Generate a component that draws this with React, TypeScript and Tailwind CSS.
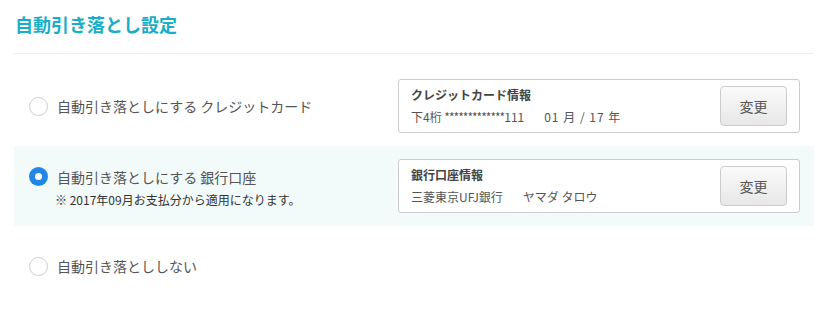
const font = { fontFamily: '"Noto Sans CJK JP", "Noto Sans", sans-serif' }

const Radio = ({ checked }: { checked?: boolean }) =>
  checked ? (
    <span className="flex h-[19px] w-[19px] shrink-0 items-center justify-center rounded-full bg-[#2186e6]">
      <span className="h-[7px] w-[7px] rounded-full bg-white" />
    </span>
  ) : (
    <span className="h-[19px] w-[19px] shrink-0 rounded-full border border-[#cfcfcf] bg-white" />
  )

const InfoCard = ({ title, children }: { title: string; children: React.ReactNode }) => (
  <div className="flex h-[54px] w-[402px] items-center justify-between rounded-[3px] border border-[#cccccc] bg-white pl-[12px] pr-[12px]">
    <div className="flex flex-col">
      <span className="text-[12px] font-bold leading-[18px] text-[#444]">{title}</span>
      <span className="mt-[4px] text-[12px] leading-[18px] text-[#555]">{children}</span>
    </div>
    <button className="h-[40px] w-[67px] rounded-[4px] border border-[#cccccc] bg-linear-to-b from-[#fafafa] to-[#e7e7e7] text-[14px] text-[#555]">
      変更
    </button>
  </div>
)

const App = () => {
  return (
    <div className="w-[832px] bg-white pl-[14px]" style={font}>
      <div className="w-[800px]">
        <div className="h-[54px] border-b border-[#efefef] pl-[1px] pt-[11px]">
          <h1 className="text-[18px] font-bold leading-[26px] text-[#19aec6]">自動引き落とし設定</h1>
        </div>

        <div className="mt-[12px]">
          <div className="flex h-[80px] items-center pl-[15px] pr-[14px]">
            <label className="flex w-[369px] items-center gap-[9px]">
              <Radio />
              <span className="text-[14px] text-[#555]">自動引き落としにする クレジットカード</span>
            </label>
            <InfoCard title="クレジットカード情報">
              下4桁 <span className="tracking-[-1px]">*************</span>111
              <span className="ml-[20px] tracking-[1px]">01 月 / 17 年</span>
            </InfoCard>
          </div>

          <div className="flex h-[80px] items-center bg-[#f2fafa] pl-[15px] pr-[14px]">
            <div className="flex w-[369px] flex-col pt-[3px]">
              <label className="flex items-center gap-[9px]">
                <Radio checked />
                <span className="text-[14px] leading-[20px] text-[#555]">自動引き落としにする 銀行口座</span>
              </label>
              <span className="ml-[26px] mt-[4px] text-[12px] leading-[18px] text-[#333]">
                ※ 2017年09月お支払分から適用になります。
              </span>
            </div>
            <InfoCard title="銀行口座情報">
              三菱東京UFJ銀行<span className="ml-[20px]">ヤマダ タロウ</span>
            </InfoCard>
          </div>

          <div className="flex h-[80px] items-center pl-[15px]">
            <label className="flex items-center gap-[9px]">
              <Radio />
              <span className="text-[14px] text-[#555]">自動引き落とししない</span>
            </label>
          </div>
        </div>
      </div>
    </div>
  )
}

export default App
